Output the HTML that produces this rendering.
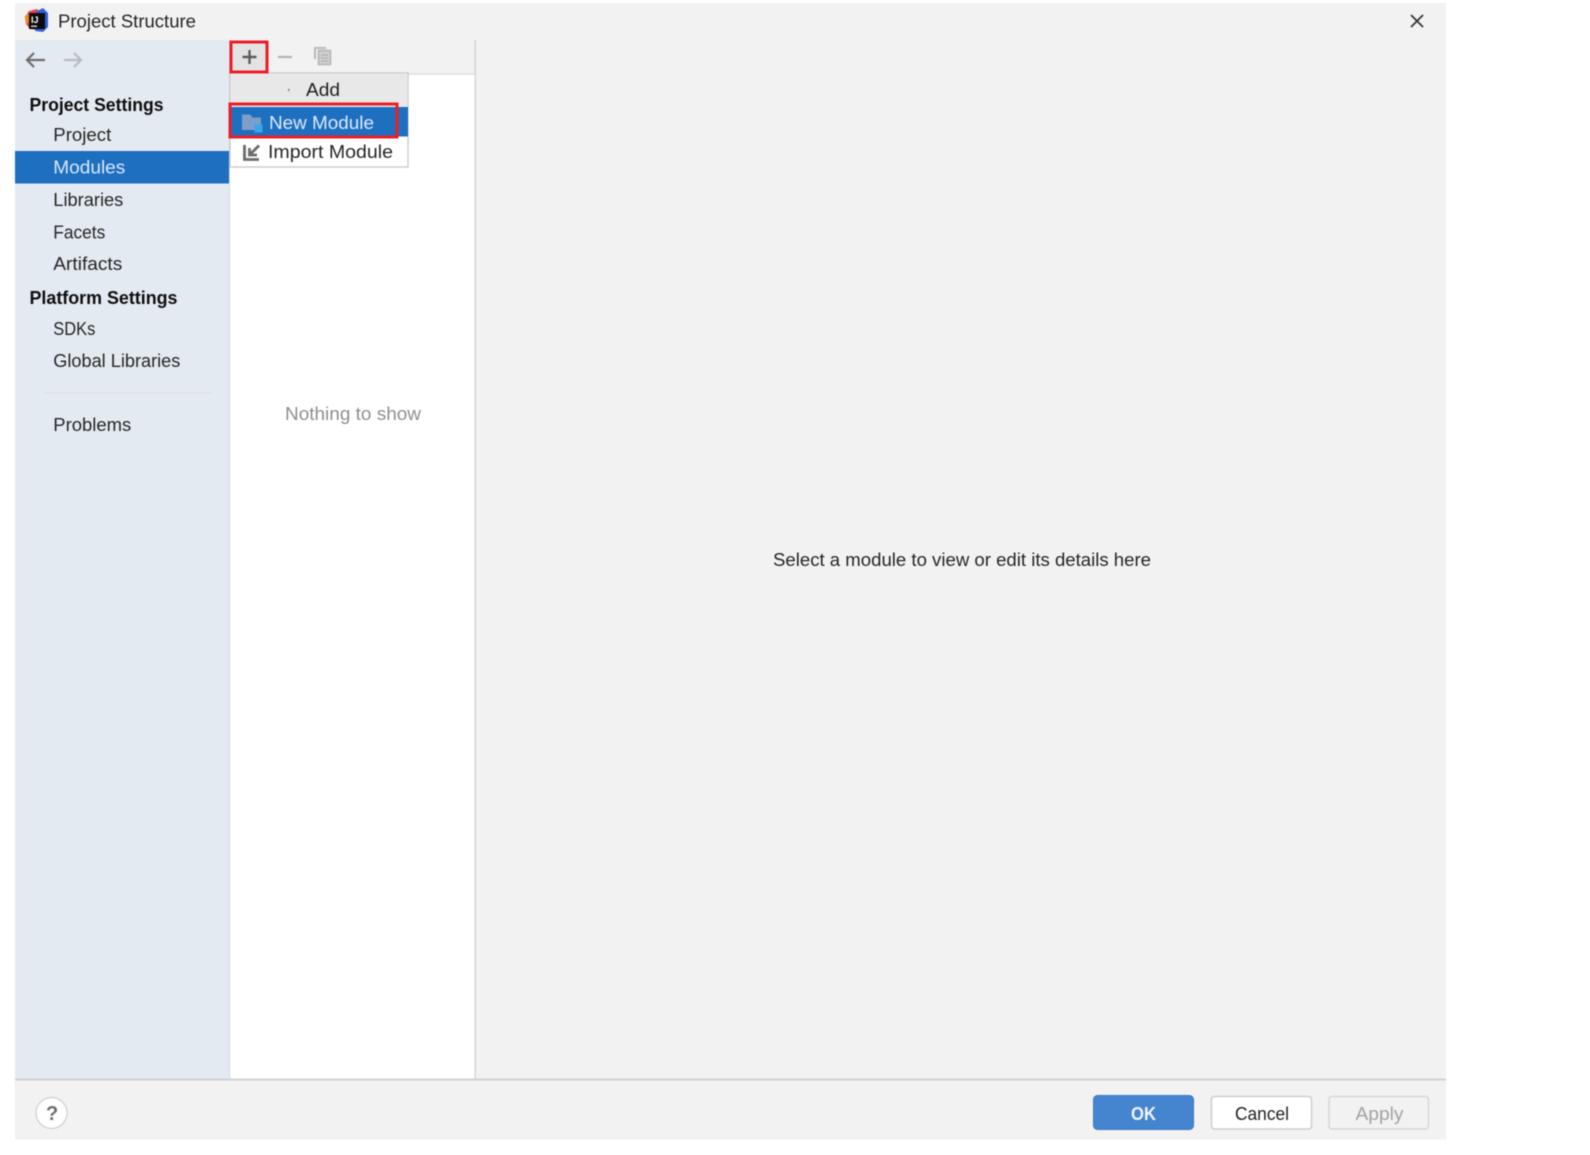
<!DOCTYPE html>
<html><head><meta charset="utf-8"><title>Project Structure</title>
<style>
html,body{margin:0;padding:0;background:#fff;width:1590px;height:1155px;overflow:hidden}
svg{display:block;filter:blur(.45px)}
text{font-family:"Liberation Sans",sans-serif;font-size:18px;fill:#262626}
.b{font-weight:bold;fill:#0e0e0e}
</style></head><body>
<svg width="1590" height="1155" viewBox="0 0 1590 1155" xmlns="http://www.w3.org/2000/svg">
<rect x="15" y="3" width="1431" height="1136.500" fill="#f2f2f2"/>
<rect x="15" y="40" width="214" height="1039" fill="#e4eaf1"/>
<rect x="229" y="40" width="246" height="1039" fill="#fff"/>
<rect x="229" y="40" width="246" height="34" fill="#f2f2f2"/>
<rect x="229" y="73.500" width="246" height="1" fill="#d4d4d4"/>
<rect x="229" y="40" width="1" height="1039" fill="#d5d8dc"/>
<rect x="474.500" y="40" width="1.500" height="1039" fill="#d4d4d4"/>
<rect x="15" y="1078.500" width="1431" height="2" fill="#d2d2d2"/>

<!-- title -->
<g>
<path d="M25 17 L29 11 L37 9 L41 14 L38 30 L30 29 L26 24Z" fill="#ea3f56"/>
<path d="M25 16 L29 13 L30 22 L26 24Z" fill="#f4861f"/>
<path d="M37 11 L43 8 L48 13 L48 27 L43 32 L35 31Z" fill="#2d62dc"/>
<rect x="29" y="13" width="16" height="16" fill="#0b0b0b"/>
<text x="31" y="23" style="font-size:9px;font-weight:bold;fill:#fff">IJ</text>
<rect x="31" y="25.500" width="6" height="1.500" fill="#ccc"/>
</g>
<text x="58" y="27.500" textLength="138" lengthAdjust="spacingAndGlyphs">Project Structure</text>
<path d="M1411 15 L1423 27 M1423 15 L1411 27" stroke="#333" stroke-width="1.700" fill="none"/>

<!-- nav arrows -->
<path d="M27 60 H45 M34 53 L27 60 L34 67" stroke="#6e6e6e" stroke-width="2.200" fill="none"/>
<path d="M64 60 H81 M74 53 L81 60 L74 67" stroke="#b9bdc2" stroke-width="2.200" fill="none"/>

<!-- sidebar -->
<rect x="15" y="151" width="214" height="32.500" fill="#1e6fc0"/>
<text class="b" x="29.500" y="111" textLength="134" lengthAdjust="spacingAndGlyphs">Project Settings</text>
<text x="53.300" y="141" textLength="58" lengthAdjust="spacingAndGlyphs">Project</text>
<text x="53.300" y="173.500" textLength="72" lengthAdjust="spacingAndGlyphs" style="fill:#d8e8f8">Modules</text>
<text x="53.300" y="206" textLength="70" lengthAdjust="spacingAndGlyphs">Libraries</text>
<text x="53.300" y="238.500" textLength="52" lengthAdjust="spacingAndGlyphs">Facets</text>
<text x="53.300" y="270" textLength="69" lengthAdjust="spacingAndGlyphs">Artifacts</text>
<text class="b" x="29.500" y="304" textLength="148" lengthAdjust="spacingAndGlyphs">Platform Settings</text>
<text x="53.300" y="335" textLength="42" lengthAdjust="spacingAndGlyphs">SDKs</text>
<text x="53.300" y="367" textLength="127" lengthAdjust="spacingAndGlyphs">Global Libraries</text>
<rect x="45" y="392" width="166" height="1" fill="#d9dfe6"/>
<text x="53.300" y="431" textLength="78" lengthAdjust="spacingAndGlyphs">Problems</text>

<!-- toolbar -->
<rect x="231" y="42" width="36" height="30" fill="#e3e3e3"/>
<path d="M249.500 50 V64 M242.500 57 H256.500" stroke="#5c5c5c" stroke-width="2.400" fill="none"/>
<path d="M278 57 H292" stroke="#b4b4b4" stroke-width="2.200" fill="none"/>
<path d="M315 59 V48 H326" stroke="#b8b8b8" stroke-width="2" fill="none"/>
<rect x="318.500" y="50.500" width="12" height="14" fill="#cfcfcf" stroke="#b4b4b4" stroke-width="1.500"/>
<path d="M321 55 H328 M321 58 H328 M321 61 H328" stroke="#a9a9a9" stroke-width="1"/>

<!-- popup -->
<rect x="230" y="73" width="178" height="94" fill="#fff" stroke="#c4c4c4" stroke-width="1.200"/>
<rect x="231" y="74" width="176" height="33" fill="#e8e8e8"/>
<rect x="288" y="89" width="1.500" height="2" fill="#777"/>
<text x="306" y="96" textLength="34" lengthAdjust="spacingAndGlyphs" style="fill:#1f1f1f">Add</text>
<rect x="231" y="107" width="177" height="29.500" fill="#1e6fc0"/>
<path d="M242 130 V114.500 H250 L252.500 117.500 H261 V130Z" fill="#7b9fc6"/>
<rect x="254.500" y="124.500" width="8" height="8" fill="#38a6ee"/>
<text x="269" y="129" textLength="105" lengthAdjust="spacingAndGlyphs" style="fill:#dbeaf9">New Module</text>
<path d="M244.500 145 V159.500 H259" stroke="#6b6b6b" stroke-width="2.800" fill="none"/>
<path d="M259 145.500 L249.500 155 M249.500 148 V155 H257" stroke="#6b6b6b" stroke-width="2.800" fill="none"/>
<text x="268" y="158" textLength="125" lengthAdjust="spacingAndGlyphs">Import Module</text>

<!-- red boxes -->
<rect x="231" y="42" width="36" height="30" fill="none" stroke="#ee1c25" stroke-width="3"/>
<rect x="230" y="104" width="167" height="33" fill="none" stroke="#ee1c25" stroke-width="3"/>

<!-- center text -->
<text x="285" y="420" textLength="136" lengthAdjust="spacingAndGlyphs" style="fill:#8f8f8f">Nothing to show</text>
<text x="773" y="566" textLength="378" lengthAdjust="spacingAndGlyphs">Select a module to view or edit its details here</text>

<!-- footer -->
<circle cx="51.500" cy="1113" r="15.500" fill="#fff" stroke="#cfcfcf" stroke-width="1.200"/>
<text x="46" y="1120" class="b" style="font-size:20px;fill:#6e6e6e">?</text>
<rect x="1093.500" y="1095.500" width="100" height="34" rx="4" fill="#4584cf" stroke="#3c78c0"/>
<text x="1131" y="1120" class="b" textLength="25" lengthAdjust="spacingAndGlyphs" style="fill:#eef5fc">OK</text>
<rect x="1211.500" y="1096.500" width="100" height="32.500" rx="3" fill="#fff" stroke="#cdcdcd" stroke-width="1.500"/>
<text x="1235" y="1120" textLength="54" lengthAdjust="spacingAndGlyphs" style="fill:#222">Cancel</text>
<rect x="1329" y="1096.500" width="99.500" height="32.500" rx="3" fill="#f2f2f2" stroke="#d6d6d6" stroke-width="1.500"/>
<text x="1355.500" y="1120" textLength="48" lengthAdjust="spacingAndGlyphs" style="fill:#a3a3a3">Apply</text>
</svg>
</body></html>
